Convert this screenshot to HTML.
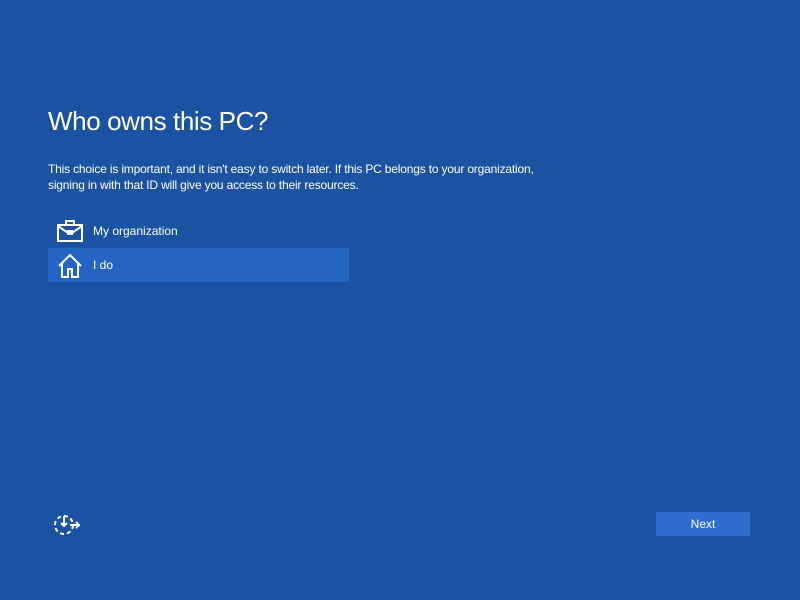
<!DOCTYPE html>
<html><head><meta charset="utf-8"><style>
html,body{margin:0;padding:0}
body{width:800px;height:600px;background:#1b52a1;font-family:"Liberation Sans",sans-serif;color:#fff;position:relative;overflow:hidden}
.t{position:absolute;left:48px;top:106px;font-size:26px;letter-spacing:-0.4px;white-space:nowrap}
.p{position:absolute;left:48px;top:161px;font-size:12px;line-height:16px;white-space:nowrap;letter-spacing:-0.18px}
.opt{position:absolute;left:48px;width:301px;height:34px}
.opt span{position:absolute;left:45px;top:10px;font-size:12px}
.opt svg{position:absolute;left:8px;top:5px}
.sel{background:#2465c3}
.btn{position:absolute;left:656px;top:512px;width:94px;height:24px;background:#2d6dd0;font-size:12px;text-align:center;line-height:24px}
</style></head><body>
<div class="t">Who owns this PC?</div>
<div class="p">This choice is important, and it isn't easy to switch later. If this PC belongs to your organization,<br>signing in with that ID will give you access to their resources.</div>
<div class="opt" style="top:214px">
<svg width="28" height="24" viewBox="0 0 28 24" fill="none" stroke="#fff" stroke-width="2"><rect x="2" y="6" width="24" height="16"/><path d="M10 6V2h8v4M2 7l10 7h4l10-7"/><rect x="12" y="12" width="4" height="3"/></svg>
<span>My organization</span></div>
<div class="opt sel" style="top:248px">
<svg width="28" height="26" viewBox="0 0 28 26" fill="none" stroke="#fff" stroke-width="2"><path d="M3 13L14 2l11 11M6 10v14h6v-8h4v8h6V10"/></svg>
<span>I do</span></div>
<svg style="position:absolute;left:52px;top:512px" width="30" height="26" viewBox="0 0 30 26" fill="none" stroke="#fff" stroke-width="2"><circle cx="12" cy="13" r="9" stroke-dasharray="4 3"/><path d="M12 4v10M9 11l3 3 3-3M18 13h9M24 10l3 3-3 3"/></svg>
<div class="btn">Next</div>
</body></html>
